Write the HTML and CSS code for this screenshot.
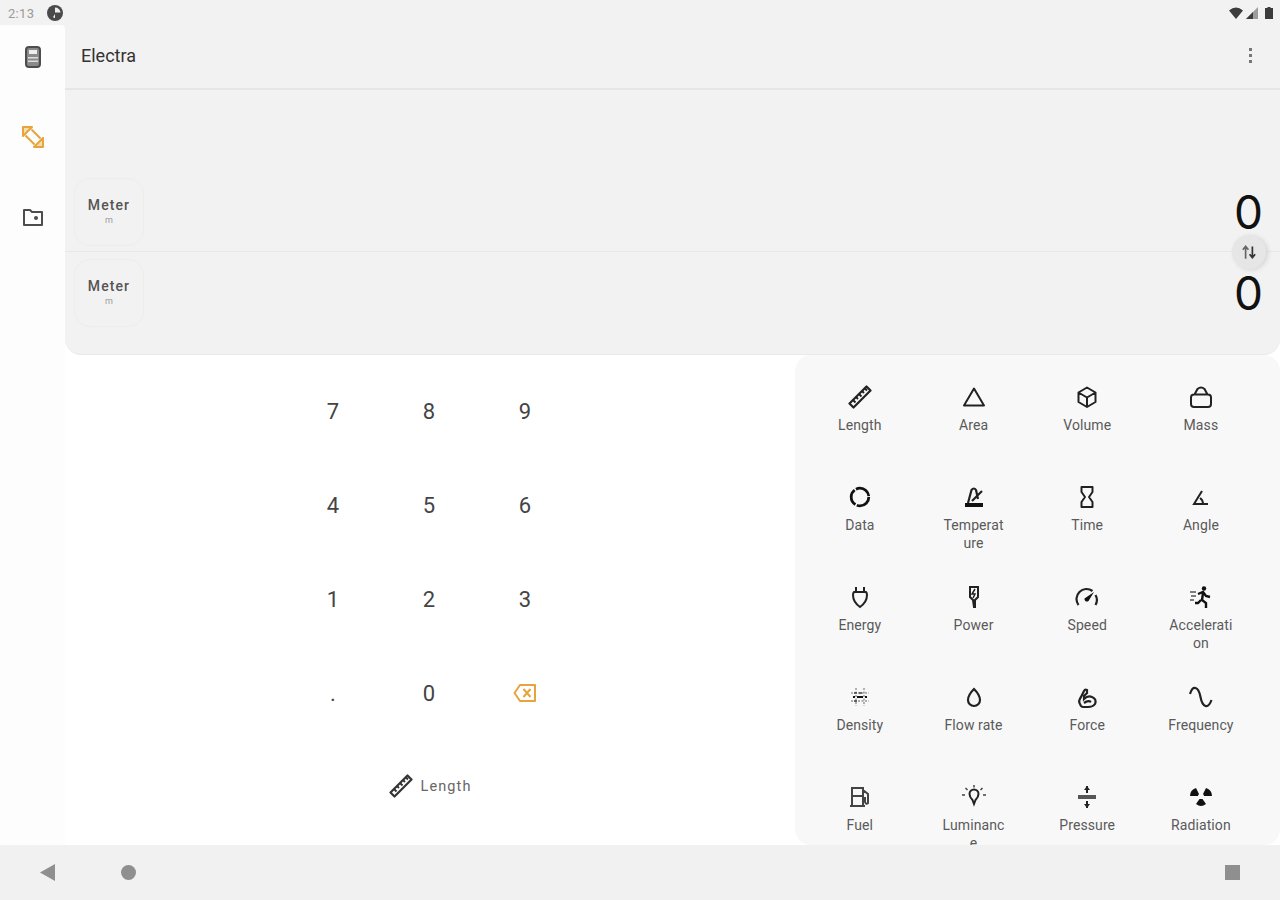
FILE: index.html
```html
<!DOCTYPE html>
<html lang="en">
<head>
    <meta charset="UTF-8">
    <meta name="viewport" content="width=device-width, initial-scale=1.0">
    <title>Electra</title>
    <link rel="stylesheet" href="styles.css">
</head>
<body>
    <svg class="defs" width="0" height="0">
        <symbol id="ruler" viewBox="0 0 24 24">
            <path d="M1.500 18.500 18.500 1.500l4 4-17 17z" fill="none" stroke="currentColor" stroke-width="2.200" stroke-linejoin="round"/>
            <path d="M5 15l2.500 2.500M8 12l2 2M11 9l2.500 2.500M14 6l2 2M17 3.500l2 2" fill="none" stroke="currentColor" stroke-width="2"/>
        </symbol>
    </svg>

    <div class="status-bar">
        <span class="clock">2:13</span>
        <svg class="status-badge" viewBox="0 0 16 16"><circle cx="8" cy="8" r="8" fill="#4a4a4a"/><path d="M8 7.500h5.500A5.500 5.500 0 0 0 8 2.500zM8 9v4a4 4 0 0 1-2-1z" fill="#eee"/></svg>
        <div class="status-right">
            <svg class="wifi" viewBox="0 0 14 12"><path d="M0 3.500Q7-2.500 14 3.500L7 12z" fill="#3c3c3c"/></svg>
            <svg class="signal" viewBox="0 0 12 12"><path d="M12 0v12H0z" fill="#9c9c9c"/><path d="M7 5v7H0z" fill="#3c3c3c"/></svg>
            <svg class="battery" viewBox="0 0 8 12"><path d="M2.500 0h3v1H8v11H0V1h2.500z" fill="#3c3c3c"/></svg>
        </div>
    </div>

    <div class="middle">
        <nav class="rail">
            <svg class="rail-icon" viewBox="0 0 24 24">
                <rect x="5" y="2" width="14" height="20" rx="3" fill="#8a8a8a" stroke="#4d4d4d" stroke-width="2"/>
                <rect x="8" y="5" width="8" height="4" fill="#eee"/>
                <path d="M7 12h10v1.500H7zM7 15.500h10v1.500H7z" fill="#ddd"/>
            </svg>
            <svg class="rail-icon" viewBox="0 0 24 24">
                <path d="M2 2h9L2 11zM22 22h-9l9-9z" fill="#f6dcae" stroke="#e8a33d" stroke-width="2" stroke-linejoin="round"/>
                <path d="M4.500 10.500 13.500 19.500M10.500 4.500l9 9" fill="none" stroke="#e8a33d" stroke-width="2"/>
            </svg>
            <svg class="rail-icon" viewBox="0 0 24 24">
                <path d="M3 5h6l2 2h10v13H3z" fill="none" stroke="#4d4d4d" stroke-width="2" stroke-linejoin="round"/>
                <circle cx="15" cy="13" r="2" fill="#4d4d4d"/>
            </svg>
        </nav>

        <main class="content">
            <section class="converter">
                <header class="toolbar">
                    <h1 class="title">Electra</h1>
                    <div class="menu-dots"><i></i><i></i><i></i></div>
                </header>
                <div class="spacer"></div>
                <div class="unit-row unit-row-first">
                    <div class="unit-box"><span class="unit-name">Meter</span><span class="unit-short">m</span></div>
                    <span class="unit-value">0</span>
                </div>
                <div class="unit-row">
                    <div class="unit-box"><span class="unit-name">Meter</span><span class="unit-short">m</span></div>
                    <span class="unit-value">0</span>
                </div>
                <button class="swap">
                    <svg viewBox="0 0 16 16"><path d="M5 14V4M2.500 6 5 3l2.500 3" fill="none" stroke="#666" stroke-width="1.500"/><path d="M11 3v10M8.500 10l2.500 3 2.500-3" fill="none" stroke="#333" stroke-width="1.500"/></svg>
                </button>
            </section>

            <section class="lower">
                <div class="keypad">
                    <div class="keys">
                        <span class="key">7</span><span class="key">8</span><span class="key">9</span>
                        <span class="key">4</span><span class="key">5</span><span class="key">6</span>
                        <span class="key">1</span><span class="key">2</span><span class="key">3</span>
                        <span class="key">.</span><span class="key">0</span>
                        <span class="key">
                            <svg class="backspace" viewBox="0 0 24 20"><path d="M7 2h15v16H7L1.500 10z" fill="none" stroke="#e8a33d" stroke-width="2" stroke-linejoin="round"/><path d="M10.500 6l7 8M17.500 6l-7 8" stroke="#e8a33d" stroke-width="2"/></svg>
                        </span>
                    </div>
                    <div class="current-type">
                        <svg class="current-icon"><use href="#ruler"/></svg>
                        <span>Length</span>
                    </div>
                </div>

                <div class="categories">
                    <div class="cat"><svg class="cat-icon"><use href="#ruler"/></svg><span>Length</span></div>
                    <div class="cat">
                        <svg class="cat-icon" viewBox="0 0 24 24"><path d="M12 3.500 22 20.500H2z" fill="none" stroke="#222" stroke-width="2" stroke-linejoin="round"/></svg>
                        <span>Area</span>
                    </div>
                    <div class="cat">
                        <svg class="cat-icon" viewBox="0 0 24 24"><path d="M12 2.500l8.500 5v9.500L12 22l-8.500-5V7.500zM3.500 7.500l8.500 5 8.500-5M12 12.500V22" fill="none" stroke="#222" stroke-width="2" stroke-linejoin="round"/></svg>
                        <span>Volume</span>
                    </div>
                    <div class="cat">
                        <svg class="cat-icon" viewBox="0 0 24 24"><path d="M5 9.500h14q3 0 3 3V19q0 3-3 3H5q-3 0-3-3v-6.500q0-3 3-3zM5.500 9.500 8.500 4Q12 1 15.500 4l3 5.500" fill="none" stroke="#222" stroke-width="2"/></svg>
                        <span>Mass</span>
                    </div>

                    <div class="cat">
                        <svg class="cat-icon" viewBox="0 0 24 24"><circle cx="12" cy="12" r="8.800" fill="none" stroke="#111" stroke-width="2.800" stroke-dasharray="17 1.500"/></svg>
                        <span>Data</span>
                    </div>
                    <div class="cat">
                        <svg class="cat-icon" viewBox="0 0 24 24"><path d="M3 22h18v-4H3z" fill="#111"/><path d="M6 18 9.500 5q2.500-3 4.500 0L16 14M10 16l10-10" fill="none" stroke="#222" stroke-width="2.200"/></svg>
                        <span>Temperature</span>
                    </div>
                    <div class="cat">
                        <svg class="cat-icon" viewBox="0 0 24 24"><path d="M6.500 2h11v5L14 12l3.500 5v5h-11v-5l3.500-5-3.500-5z" fill="none" stroke="#222" stroke-width="2" stroke-linejoin="round"/></svg>
                        <span>Time</span>
                    </div>
                    <div class="cat">
                        <svg class="cat-icon" viewBox="0 0 24 24"><path d="M13 6 5 19h14M11 13q3 2 3 6" fill="none" stroke="#222" stroke-width="2"/></svg>
                        <span>Angle</span>
                    </div>

                    <div class="cat">
                        <svg class="cat-icon" viewBox="0 0 24 24"><path d="M8 2v5M16 2v5M6 7h12q1 1 1 3 0 7-7 12-7-5-7-12 0-2 1-3z" fill="none" stroke="#222" stroke-width="2"/></svg>
                        <span>Energy</span>
                    </div>
                    <div class="cat">
                        <svg class="cat-icon" viewBox="0 0 24 24"><path d="M8 2h8v10l-3 3v7l-1 0-1-7-3-3z" fill="none" stroke="#222" stroke-width="2"/><path d="M13 4 10 9h3l-2 4" fill="none" stroke="#222" stroke-width="1.500"/></svg>
                        <span>Power</span>
                    </div>
                    <div class="cat">
                        <svg class="cat-icon" viewBox="0 0 24 24"><path d="M3.500 20a10 10 0 0 1 14-14M20.500 10a10 10 0 0 1 0 10" fill="none" stroke="#222" stroke-width="2.200"/><path d="M19 7 13.500 16a2.500 2.500 0 0 1-4-2.500z" fill="#111"/></svg>
                        <span>Speed</span>
                    </div>
                    <div class="cat">
                        <svg class="cat-icon" viewBox="0 0 24 24"><circle cx="15" cy="3.500" r="2.200" fill="#111"/><path d="M9 9l5-2 3 4 4 1M14 8l-1 7 4 3v5M12 15l-3 3H6" fill="none" stroke="#111" stroke-width="2.400"/><path d="M1 7h6M2 11h5M1 15h4" stroke="#555" stroke-width="1.500"/></svg>
                        <span>Acceleration</span>
                    </div>

                    <div class="cat">
                        <svg class="cat-icon" viewBox="0 0 24 24"><path d="M8 3v18M16 3v18M3 8h18M3 16h18" stroke="#999" stroke-width="1.500" stroke-dasharray="2 1.500"/><path d="M9 12h6M5 12h2M17 12h2" stroke="#111" stroke-width="2"/><path d="M6 8h3M11 8h3M6 16h3" stroke="#444" stroke-width="1.500"/></svg>
                        <span>Density</span>
                    </div>
                    <div class="cat">
                        <svg class="cat-icon" viewBox="0 0 24 24"><path d="M12 4q6 6 6 11a6 6 0 0 1-12 0q0-5 6-11z" fill="none" stroke="#222" stroke-width="2.200"/></svg>
                        <span>Flow rate</span>
                    </div>
                    <div class="cat">
                        <svg class="cat-icon" viewBox="0 0 24 24"><path d="M5 19q-2-3 1-7l3-6q1-2 3-1v3l-3 3v3q4-4 8-2 5 2 3 7-2 3-7 3H8q-2 0-3-3zM9 18q4-3 7-1" fill="none" stroke="#222" stroke-width="2.200"/></svg>
                        <span>Force</span>
                    </div>
                    <div class="cat">
                        <svg class="cat-icon" viewBox="0 0 24 24"><path d="M1 9Q3 2 6.500 3 10 4 11.500 12 13 20 16.500 21q3.500 1 6-6" fill="none" stroke="#222" stroke-width="2.200"/></svg>
                        <span>Frequency</span>
                    </div>

                    <div class="cat">
                        <svg class="cat-icon" viewBox="0 0 24 24"><path d="M4 21V3h11v18M2 21h15M4 11h11M15 5l5 4v9q-2 2-3-1v-5" fill="none" stroke="#444" stroke-width="2"/></svg>
                        <span>Fuel</span>
                    </div>
                    <div class="cat">
                        <svg class="cat-icon" viewBox="0 0 24 24"><path d="M7.500 9a4.500 4.500 0 1 1 9 0q0 3-3 6l-1.500 4-1.500-4q-3-3-3-6z" fill="none" stroke="#222" stroke-width="2"/><path d="M12 0v2.500M3.500 3 5.500 5M20.500 3 18.500 5M0 10h3M21 10h3" stroke="#444" stroke-width="1.500"/></svg>
                        <span>Luminance</span>
                    </div>
                    <div class="cat">
                        <svg class="cat-icon" viewBox="0 0 24 24"><path d="M12 1v7M12 16v7" stroke="#222" stroke-width="2"/><path d="M9 5l3-4 3 4zM9 19l3 4 3-4z" fill="#222"/><path d="M3 12h18" stroke="#555" stroke-width="4"/></svg>
                        <span>Pressure</span>
                    </div>
                    <div class="cat">
                        <svg class="cat-icon" viewBox="0 0 24 24"><path d="M1 11q0-6 6-8l3 6q-1 1-1 2zM23 11q0-6-6-8l-3 6q1 1 1 2zM7 19q5 4 10 0l-3.500-5h-3z" fill="#111"/></svg>
                        <span>Radiation</span>
                    </div>
                </div>
            </section>
        </main>
    </div>

    <div class="nav-bar">
        <svg class="nav-back" viewBox="0 0 15 17"><path d="M15 0v17L0 8.500z" fill="#8f8f8f"/></svg>
        <span class="nav-home"></span>
        <span class="nav-recent"></span>
    </div>
</body>
</html>
```

FILE: styles.css
```css
* {
    box-sizing: border-box;
}
body {
    margin: 0;
    width: 1280px;
    height: 900px;
    overflow: hidden;
    display: flex;
    flex-direction: column;
    background-color: #f2f2f2;
    font-family: Roboto, "Noto Sans", sans-serif;
    color: #222;
}
.defs {
    position: absolute;
}

/* status bar */
.status-bar {
    height: 25px;
    display: flex;
    align-items: center;
    padding: 1px 7px 0 8px;
}
.clock {
    font-size: 13px;
    color: #9a9a9a;
    letter-spacing: 0.3px;
}
.status-badge {
    width: 16px;
    height: 16px;
    margin-left: 13px;
}
.status-right {
    margin-left: auto;
    display: flex;
    align-items: center;
    gap: 3px;
}
.wifi {
    width: 14px;
    height: 12px;
}
.signal {
    width: 12px;
    height: 12px;
}
.battery {
    width: 8px;
    height: 12px;
    margin-left: 4px;
}

/* middle part */
.middle {
    flex: 1;
    display: flex;
    min-height: 0;
}
.rail {
    width: 65px;
    background-color: #fdfdfd;
    border-top-right-radius: 4px;
    display: flex;
    flex-direction: column;
    align-items: center;
    gap: 56px;
    padding-top: 20px;
}
.rail-icon {
    width: 24px;
    height: 24px;
    flex: none;
}
.content {
    flex: 1;
    display: flex;
    flex-direction: column;
    background-color: #fff;
}

/* converter panel */
.converter {
    position: relative;
    height: 330px;
    display: flex;
    flex-direction: column;
    padding-bottom: 22px;
    background-color: #f2f2f2;
    border-bottom: 1px solid #e9e9e9;
    border-radius: 0 0 16px 16px;
}
.toolbar {
    height: 65px;
    display: flex;
    align-items: center;
    justify-content: space-between;
    padding: 0 28px 2px 16px;
    border-bottom: 2px solid #e6e6e6;
}
.title {
    margin: 0;
    font-size: 18px;
    font-weight: 400;
    color: #333;
}
.menu-dots {
    display: flex;
    flex-direction: column;
    gap: 3px;
}
.menu-dots i {
    width: 3px;
    height: 3px;
    background-color: #777;
}
.spacer {
    flex: 1;
}
.unit-row {
    height: 80px;
    display: flex;
    align-items: flex-end;
    justify-content: space-between;
    padding: 0 17px 5px 9px;
}
.unit-row-first {
    height: 81px;
    border-bottom: 1px solid #e8e8e8;
}
.unit-box {
    width: 70px;
    height: 68px;
    border: 1px solid #ededed;
    border-radius: 16px;
    display: flex;
    flex-direction: column;
    align-items: center;
    justify-content: center;
}
.unit-name {
    font-size: 14px;
    font-weight: 500;
    letter-spacing: 1.1px;
    color: #555;
}
.unit-short {
    font-size: 9px;
    line-height: 14px;
    color: #999;
}
.unit-value {
    align-self: center;
    font-family: Inter, Roboto, sans-serif;
    font-size: 46px;
    line-height: 54px;
    padding-top: 6px;
    color: #111;
}
.swap {
    position: absolute;
    right: 14px;
    top: 210px;
    width: 34px;
    height: 34px;
    padding: 8px;
    border: none;
    border-radius: 50%;
    background-color: #e6e6e6;
    box-shadow: 2px 1px 5px rgba(0, 0, 0, 0.12);
}
.swap svg {
    display: block;
    width: 18px;
    height: 18px;
}

/* keypad */
.lower {
    flex: 1;
    display: flex;
    min-height: 0;
}
.keypad {
    width: 730px;
    display: flex;
    flex-direction: column;
    padding-top: 9px;
}
.keys {
    display: grid;
    grid-template-columns: repeat(3, 96px);
    grid-auto-rows: 94px;
    justify-content: center;
    padding-right: 2px;
}
.key {
    display: flex;
    align-items: center;
    justify-content: center;
    font-size: 22px;
    color: #444;
}
.backspace {
    width: 24px;
    height: 20px;
}
.current-type {
    height: 92px;
    display: flex;
    align-items: center;
    justify-content: center;
    gap: 8px;
    font-size: 14.5px;
    letter-spacing: 1.100px;
    color: #666;
}
.current-icon {
    width: 24px;
    height: 24px;
    color: #333;
}

/* category grid */
.categories {
    flex: 1;
    display: grid;
    grid-template-columns: repeat(4, 113.7px);
    grid-auto-rows: 100px;
    padding: 30px 22px 0 8px;
    background-color: #f8f8f8;
    border-radius: 16px;
    overflow: hidden;
}
.cat {
    display: flex;
    flex-direction: column;
    align-items: center;
    font-size: 14px;
    line-height: 18px;
    letter-spacing: 0.1px;
    color: #5a5a5a;
}
.cat span {
    width: 66.5px;
    margin-top: 7px;
    text-align: center;
    word-break: break-all;
}
.cat-icon {
    width: 24px;
    height: 24px;
    flex: none;
    color: #222;
}

/* android nav */
.nav-bar {
    height: 55px;
    display: flex;
    align-items: center;
    gap: 66px;
    padding: 0 40px 0 40px;
    background-color: #f1f1f1;
}
.nav-back {
    width: 15px;
    height: 17px;
}
.nav-home {
    width: 15px;
    height: 15px;
    border-radius: 50%;
    background-color: #8f8f8f;
}
.nav-recent {
    width: 15px;
    height: 15px;
    margin-left: auto;
    background-color: #8f8f8f;
}
```
